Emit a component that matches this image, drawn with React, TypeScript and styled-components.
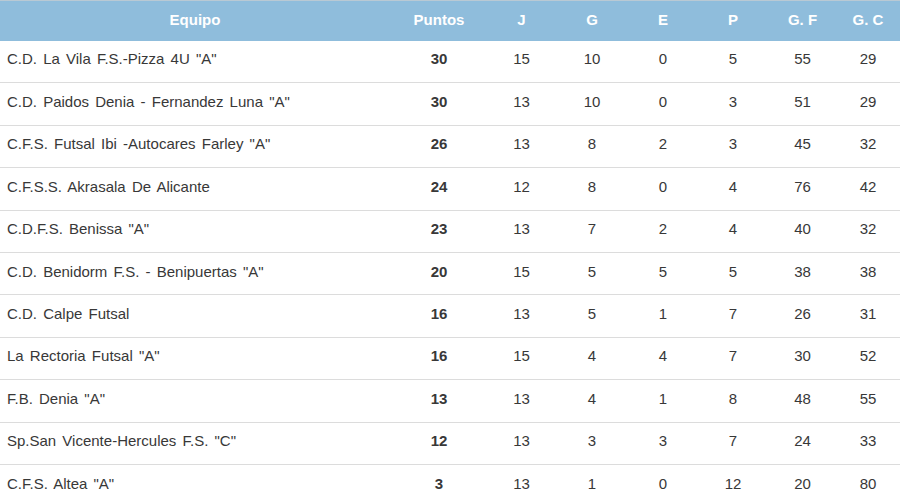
import React from 'react';
import styled, { createGlobalStyle } from 'styled-components';

type Team = {
    name: string;
    pts: number;
    j: number;
    g: number;
    e: number;
    p: number;
    gf: number;
    gc: number;
};

const teams: Team[] = [
    { name: 'C.D. La Vila F.S.-Pizza 4U "A"', pts: 30, j: 15, g: 10, e: 0, p: 5, gf: 55, gc: 29 },
    { name: 'C.D. Paidos Denia - Fernandez Luna "A"', pts: 30, j: 13, g: 10, e: 0, p: 3, gf: 51, gc: 29 },
    { name: 'C.F.S. Futsal Ibi -Autocares Farley "A"', pts: 26, j: 13, g: 8, e: 2, p: 3, gf: 45, gc: 32 },
    { name: 'C.F.S.S. Akrasala De Alicante', pts: 24, j: 12, g: 8, e: 0, p: 4, gf: 76, gc: 42 },
    { name: 'C.D.F.S. Benissa "A"', pts: 23, j: 13, g: 7, e: 2, p: 4, gf: 40, gc: 32 },
    { name: 'C.D. Benidorm F.S. - Benipuertas "A"', pts: 20, j: 15, g: 5, e: 5, p: 5, gf: 38, gc: 38 },
    { name: 'C.D. Calpe Futsal', pts: 16, j: 13, g: 5, e: 1, p: 7, gf: 26, gc: 31 },
    { name: 'La Rectoria Futsal "A"', pts: 16, j: 15, g: 4, e: 4, p: 7, gf: 30, gc: 52 },
    { name: 'F.B. Denia "A"', pts: 13, j: 13, g: 4, e: 1, p: 8, gf: 48, gc: 55 },
    { name: 'Sp.San Vicente-Hercules F.S. "C"', pts: 12, j: 13, g: 3, e: 3, p: 7, gf: 24, gc: 33 },
    { name: 'C.F.S. Altea "A"', pts: 3, j: 13, g: 1, e: 0, p: 12, gf: 20, gc: 80 },
];

const GlobalStyle = createGlobalStyle`
    html, body {
        margin: 0;
        padding: 0;
        background: #fff;
        font-family: 'Liberation Sans', Arial, sans-serif;
        overflow: hidden;
    }
`;

const App: React.FC = () => {
    return (
        <>
            <GlobalStyle />
            <Table>
                <colgroup>
                    <col style={{ width: 390 }} />
                    <col style={{ width: 98 }} />
                    <col style={{ width: 67 }} />
                    <col style={{ width: 74 }} />
                    <col style={{ width: 68 }} />
                    <col style={{ width: 72 }} />
                    <col style={{ width: 67 }} />
                    <col style={{ width: 64 }} />
                </colgroup>
                <thead>
                    <tr>
                        <Th>Equipo</Th>
                        <Th>Puntos</Th>
                        <Th>J</Th>
                        <Th>G</Th>
                        <Th>E</Th>
                        <Th>P</Th>
                        <Th>G. F</Th>
                        <Th>G. C</Th>
                    </tr>
                </thead>
                <tbody>
                    {teams.map(t => (
                        <Row key={t.name}>
                            <NameCell>{t.name}</NameCell>
                            <Cell $bold>{t.pts}</Cell>
                            <Cell>{t.j}</Cell>
                            <Cell>{t.g}</Cell>
                            <Cell>{t.e}</Cell>
                            <Cell>{t.p}</Cell>
                            <Cell>{t.gf}</Cell>
                            <Cell>{t.gc}</Cell>
                        </Row>
                    ))}
                </tbody>
            </Table>
        </>
    );
};

const Table = styled.table`
    width: 900px;
    border-collapse: collapse;
    table-layout: fixed;
    font-size: 15px;
    color: #383838;
`;

const Th = styled.th`
    height: 40px;
    padding: 0 0 2px;
    background: #8fbddc;
    border-top: 1px solid #b9c9d4;
    color: #fff;
    font-weight: bold;
    text-align: center;
    vertical-align: middle;
    box-sizing: border-box;
`;

const Row = styled.tr`
    height: 42.4px;
    & + & td {
        border-top: 1px solid #dcdcdc;
    }
`;

const Cell = styled.td<{ $bold?: boolean }>`
    padding: 0 0 5px;
    text-align: center;
    vertical-align: middle;
    font-weight: ${p => (p.$bold ? 'bold' : 'normal')};
    box-sizing: border-box;
`;

const NameCell = styled(Cell)`
    text-align: left;
    padding-left: 7px;
    word-spacing: 2px;
`;

export default App;
